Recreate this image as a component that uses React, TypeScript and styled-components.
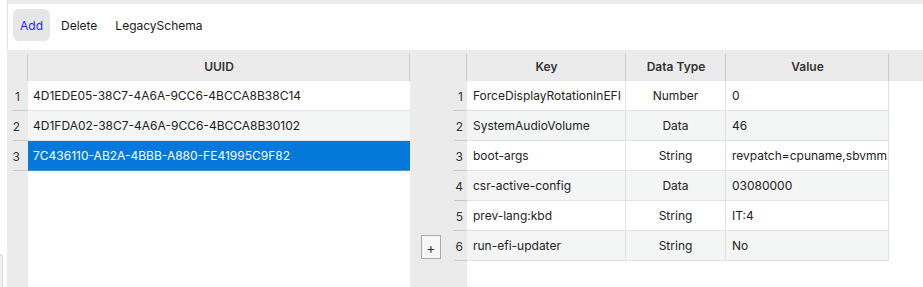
import React from "react";
import styled, { createGlobalStyle } from "styled-components";

const GlobalStyle = createGlobalStyle`
  html, body, #root { margin: 0; height: 100%; }
  body {
    font-family: "Inter", "Noto Sans", sans-serif;
    font-size: 12px;
    color: #222;
    background: #fff;
    overflow: hidden;
  }
`;

const GRAY = "#ebebeb";
const ALT = "#f4f5f5";
const LINE = "#e2e2e2";

const Shell = styled.div`
  display: flex;
  height: 100vh;
`;

const LeftStrip = styled.div`
  width: 7px;
  display: flex;
  flex-direction: column;
  justify-content: flex-end;
`;

const Peek = styled.div`
  width: 2px;
  height: 32px;
  border: 1px solid #d6d6d6;
  border-left: none;
  border-bottom: none;
  border-radius: 0 3px 0 0;
  background: #f2f2f2;
`;

const Main = styled.div`
  flex: 1;
  display: flex;
  flex-direction: column;
  min-width: 0;
`;

const TopBand = styled.div`
  height: 4px;
  background: ${GRAY};
  border-left: 1px solid #e2e2e2;
`;

const Toolbar = styled.div`
  height: 46px;
  box-sizing: border-box;
  padding: 5px 0 9px 5px;
  display: flex;
  align-items: stretch;
  gap: 4px;
  border-left: 1px solid #e2e2e2;
`;

const ToolButton = styled.button<{ $active?: boolean }>`
  font: inherit;
  font-size: 12px;
  border: none;
  border-radius: 6px;
  padding: 0 7px;
  background: ${(p) => (p.$active ? "#e6e6e6" : "transparent")};
  color: ${(p) => (p.$active ? "#1f1fff" : "#1a1a1a")};
  cursor: pointer;
`;

const Content = styled.div`
  flex: 1;
  display: flex;
  min-height: 0;
`;

const LeftTable = styled.div`
  width: 403px;
  display: grid;
  grid-template-columns: 21px 1fr;
  grid-template-rows: 31px repeat(3, 30px) 1fr;
`;

const RightTable = styled.div`
  flex: 1;
  display: grid;
  grid-template-columns: 44px 13px 159px 100px 163px 1fr;
  grid-template-rows: 31px repeat(6, 30px) 1fr;
  background: #fff;
`;

const HeadCell = styled.div<{ $divider?: boolean }>`
  position: relative;
  background: ${GRAY};
  font-weight: 600;
  color: #333;
  display: flex;
  align-items: center;
  justify-content: center;
  padding-top: 2px;
  box-sizing: border-box;
  &::after {
    content: "";
    display: ${(p) => (p.$divider ? "block" : "none")};
    position: absolute;
    right: 0;
    top: 4px;
    bottom: 0;
    width: 1px;
    background: #c8c8c8;
  }
`;

const NumCell = styled.div<{ $inset: number; $line?: boolean }>`
  background: ${GRAY};
  display: flex;
  align-items: center;
  justify-content: flex-end;
  color: #333;
  box-sizing: border-box;
  padding-right: ${(p) => (p.$inset > 4 ? 8 : 4)}px;
  background-image: ${(p) =>
    p.$line ? "linear-gradient(#c8c8c8, #c8c8c8)" : "none"};
  background-repeat: no-repeat;
  background-position: ${(p) => p.$inset}px 100%;
  background-size: calc(100% - ${(p) => p.$inset}px) 1px;
`;

const Filler = styled.div<{ $gray?: boolean }>`
  background: ${(p) => (p.$gray ? GRAY : "#fff")};
`;

const GutterCell = styled.div`
  background: ${GRAY};
  display: flex;
  align-items: center;
  justify-content: flex-end;
  padding-right: 13px;
`;

const PlusButton = styled.button`
  width: 20px;
  height: 24px;
  box-sizing: border-box;
  border: 1px solid #ababab;
  background: #f6f6f6;
  font: inherit;
  font-size: 14px;
  color: #333;
  padding: 0;
  display: flex;
  align-items: center;
  justify-content: center;
  margin-top: 2px;
`;

const UuidCell = styled.div<{ $alt?: boolean; $selected?: boolean }>`
  display: flex;
  align-items: center;
  padding-left: 5px;
  box-sizing: border-box;
  border-bottom: 1px solid ${(p) => (p.$selected ? "#3d95e0" : "#e6e6e6")};
  background: ${(p) => (p.$selected ? "#0479db" : p.$alt ? ALT : "#fff")};
  color: ${(p) => (p.$selected ? "#fff" : "#222")};
  white-space: nowrap;
`;

const DataCell = styled.div<{ $alt?: boolean; $center?: boolean }>`
  display: flex;
  align-items: center;
  justify-content: ${(p) => (p.$center ? "center" : "flex-start")};
  padding: 0 6px;
  box-sizing: border-box;
  background: ${(p) => (p.$alt ? ALT : "#fff")};
  border-right: 1px solid ${LINE};
  border-bottom: 1px solid ${LINE};
  white-space: nowrap;
  overflow: hidden;
`;

const uuids = [
  "4D1EDE05-38C7-4A6A-9CC6-4BCCA8B38C14",
  "4D1FDA02-38C7-4A6A-9CC6-4BCCA8B30102",
  "7C436110-AB2A-4BBB-A880-FE41995C9F82",
];

const entries = [
  { key: "ForceDisplayRotationInEFI", type: "Number", value: "0" },
  { key: "SystemAudioVolume", type: "Data", value: "46" },
  { key: "boot-args", type: "String", value: "revpatch=cpuname,sbvmm" },
  { key: "csr-active-config", type: "Data", value: "03080000" },
  { key: "prev-lang:kbd", type: "String", value: "IT:4" },
  { key: "run-efi-updater", type: "String", value: "No" },
];

export default function App() {
  return (
    <>
      <GlobalStyle />
      <Shell>
        <LeftStrip>
          <Peek />
        </LeftStrip>
        <Main>
          <TopBand />
          <Toolbar>
            <ToolButton $active>Add</ToolButton>
            <ToolButton>Delete</ToolButton>
            <ToolButton>LegacySchema</ToolButton>
          </Toolbar>
          <Content>
            <LeftTable>
              <HeadCell $divider />
              <HeadCell $divider>UUID</HeadCell>
              {uuids.map((u, i) => (
                <React.Fragment key={u}>
                  <NumCell $inset={6} $line>{i + 1}</NumCell>
                  <UuidCell $alt={i % 2 === 1} $selected={i === 2}>
                    {u}
                  </UuidCell>
                </React.Fragment>
              ))}
              <Filler $gray />
              <Filler />
            </LeftTable>
            <RightTable>
              <HeadCell />
              <HeadCell $divider />
              <HeadCell $divider>Key</HeadCell>
              <HeadCell $divider>Data Type</HeadCell>
              <HeadCell $divider>Value</HeadCell>
              <HeadCell />
              {entries.map((e, i) => (
                <React.Fragment key={e.key}>
                  <GutterCell>
                    {i === entries.length - 1 && <PlusButton>+</PlusButton>}
                  </GutterCell>
                  <NumCell $inset={0} $line>{i + 1}</NumCell>
                  <DataCell $alt={i % 2 === 1}>{e.key}</DataCell>
                  <DataCell $alt={i % 2 === 1} $center>
                    {e.type}
                  </DataCell>
                  <DataCell $alt={i % 2 === 1}>{e.value}</DataCell>
                  <Filler />
                </React.Fragment>
              ))}
              <Filler $gray />
              <Filler $gray />
              <Filler />
              <Filler />
              <Filler />
              <Filler />
            </RightTable>
          </Content>
        </Main>
      </Shell>
    </>
  );
}
